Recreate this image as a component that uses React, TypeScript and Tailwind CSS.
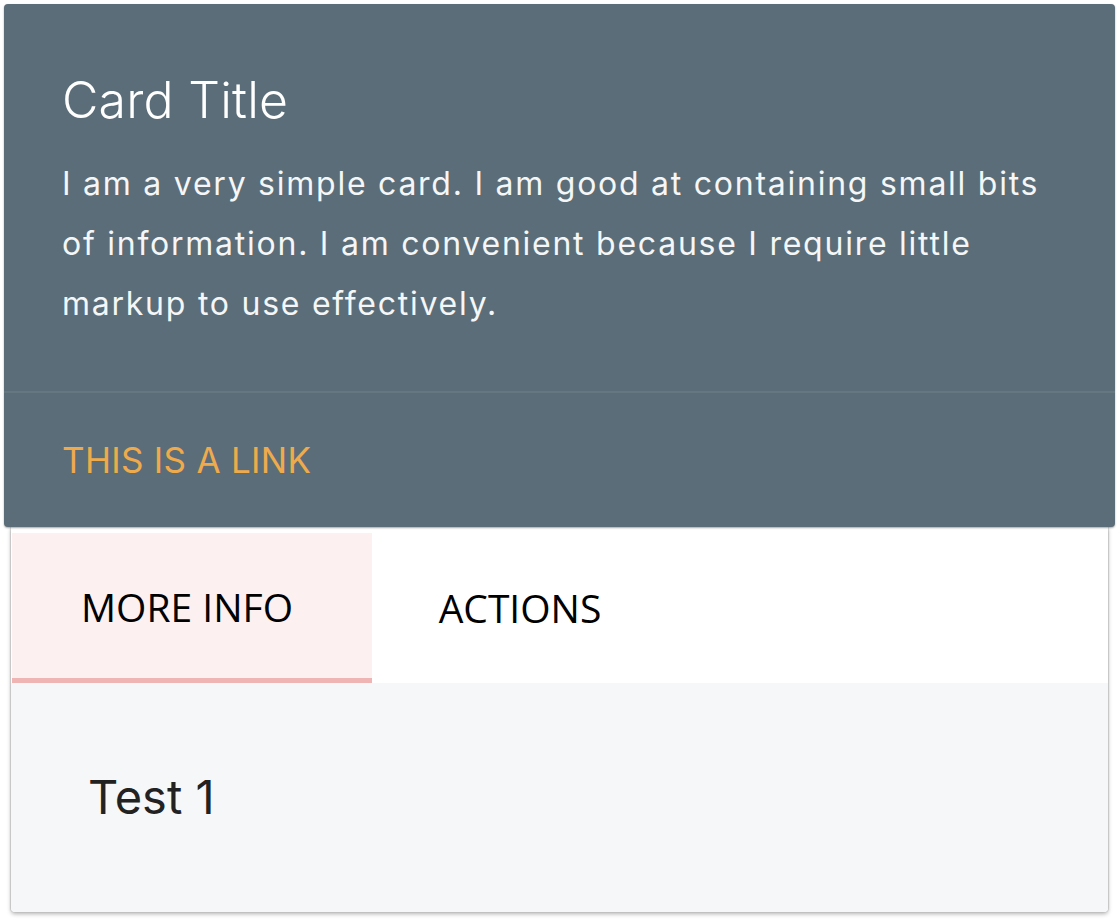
import { useState } from "react";

const TABS = ["MORE INFO", "ACTIONS"];

// Dark info card with a tabbed reveal panel underneath.
export default function App() {
  const [active, setActive] = useState(0);

  return (
    <div className="min-h-[924px] w-[1120px] bg-white pt-[4px] font-['Inter',sans-serif]">
      <div className="relative z-10 mx-[4px] mr-[5px] rounded-[4px] bg-[#5b6d78] text-white shadow-[0_1px_2px_rgba(0,0,0,0.35)]">
        <div className="px-[58px] pb-[57px] pt-[66px]">
          <h2 className="text-[50px] font-light leading-[60px] tracking-[0.2px]">Card Title</h2>
          <p className="mt-[24px] text-[32px] leading-[60px] tracking-[1.75px] text-[#f4f6f7]">
            I am a very simple card. I am good at containing small bits of information. I am
            convenient because I require little markup to use effectively.
          </p>
        </div>
        <div className="flex h-[136px] items-center border-t-2 border-[#66787f] px-[58px]">
          <a href="#" className="text-[35px] tracking-[0.3px] text-[#efaa4c]">
            THIS IS A LINK
          </a>
        </div>
      </div>

      <div className="mx-[11px] mr-[12px] rounded-b-[4px] bg-white shadow-[0_2px_4px_rgba(0,0,0,0.3),-1px_0_1px_rgba(0,0,0,0.12),1px_0_1px_rgba(0,0,0,0.12)]">
        <div className="flex h-[156px] pt-[6px]">
          {TABS.map((tab, i) => (
            <button
              key={tab}
              onClick={() => setActive(i)}
              className={
                i === active
                  ? "ml-[1px] flex h-[150px] w-[360px] items-center justify-center border-b-[5px] border-[#eeb5b4] bg-[#fcf0f1] pr-[10px] pt-[4px] font-['Open_Sans',sans-serif] text-[39px] text-black"
                  : "flex h-[150px] w-[296px] items-center justify-center font-['Open_Sans',sans-serif] text-[39px] text-black"
              }
            >
              {tab}
            </button>
          ))}
        </div>
        <div className="h-[229px] rounded-b-[4px] bg-[#f6f7f9] px-[77px] pt-[90px]">
          <div className="text-[47px] leading-none text-[#222]">
            {active === 0 ? "Test 1" : "Test 2"}
          </div>
        </div>
      </div>
    </div>
  );
}
